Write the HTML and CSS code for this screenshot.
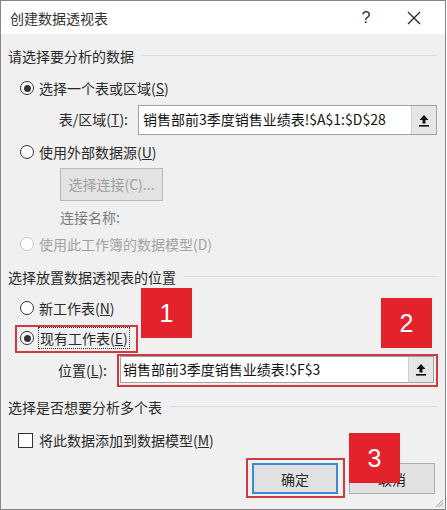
FILE: index.html
```html
<!DOCTYPE html>
<html lang="zh-CN">

<head>
    <meta charset="UTF-8">
    <title>创建数据透视表</title>
    <link rel="stylesheet" href="styles.css">
</head>

<body>
    <div class="dialog">
        <div class="titlebar">
            <span class="title">创建数据透视表</span>
            <span class="help">?</span>
            <span class="close">
                <svg width="14" height="14" viewBox="0 0 14 14"><path d="M1 1L13 13M13 1L1 13" stroke="#222" stroke-width="1.2" fill="none"/></svg>
            </span>
        </div>

        <div class="content">
            <div class="group-head g1"><span>请选择要分析的数据</span><i class="rule"></i></div>

            <div class="option o1"><span class="radio checked"></span>选择一个表或区域(<u>S</u>)</div>

            <div class="field f-table">
                <span class="field-label l-table">表/区域(<u>T</u>):</span>
                <div class="ref-input">
                    <span class="ref-text">销售部前3季度销售业绩表!$A$1:$D$28</span>
                    <span class="ref-btn">
                        <svg width="12" height="13" viewBox="0 0 12 13"><path d="M6 1L1.5 6H4.5V9.5H7.5V6H10.5Z" fill="#111"/><rect x="1" y="11" width="10" height="1.6" fill="#111"/></svg>
                    </span>
                </div>
            </div>

            <div class="option o2"><span class="radio"></span>使用外部数据源(<u>U</u>)</div>

            <div class="conn-btn">选择连接(C)...</div>
            <div class="conn-name">连接名称:</div>

            <div class="option o3 disabled"><span class="radio"></span>使用此工作簿的数据模型(D)</div>

            <div class="group-head g2"><span>选择放置数据透视表的位置</span><i class="rule"></i></div>

            <div class="option o4"><span class="radio"></span>新工作表(<u>N</u>)</div>
            <div class="option o5"><span class="radio checked"></span><span class="focus">现有工作表(<u>E</u>)</span></div>

            <div class="field f-pos">
                <span class="field-label l-pos">位置(<u>L</u>):</span>
                <div class="ref-input">
                    <span class="ref-text">销售部前3季度销售业绩表!$F$3</span>
                    <span class="ref-btn">
                        <svg width="12" height="13" viewBox="0 0 12 13"><path d="M6 1L1.5 6H4.5V9.5H7.5V6H10.5Z" fill="#111"/><rect x="1" y="11" width="10" height="1.6" fill="#111"/></svg>
                    </span>
                </div>
            </div>

            <div class="group-head g3"><span>选择是否想要分析多个表</span><i class="rule"></i></div>

            <div class="option o6"><span class="checkbox"></span>将此数据添加到数据模型(<u>M</u>)</div>

            <div class="actions">
                <button class="btn btn-ok">确定</button>
                <button class="btn">取消</button>
            </div>
        </div>

        <!-- annotations drawn over the dialog -->
        <div class="mark mark-existing"></div>
        <div class="mark mark-position"></div>
        <div class="mark mark-ok"></div>
        <div class="badge badge-1">1</div>
        <div class="badge badge-2">2</div>
        <div class="badge badge-3">3</div>

        <svg class="grip" width="10" height="10" viewBox="0 0 10 10"><path d="M9 2L2 9M9 5L5 9M9 8L8 9" stroke="#999" stroke-width="1"/></svg>
    </div>
</body>

</html>
```

FILE: styles.css
```css
body {
    margin: 0;
    padding: 0;
    background: #fff;
    font-family: "Noto Sans CJK SC", "Noto Sans", sans-serif;
    font-size: 14px;
    color: #2a2a2a;
}

.dialog {
    position: relative;
    box-sizing: border-box;
    width: 446px;
    height: 510px;
    border: 1px solid #858585;
    background: #f0f0f0;
}

.titlebar {
    display: flex;
    align-items: center;
    height: 33px;
    padding: 0 8px 0 9px;
    background: #fff;
}

.titlebar .title {
    flex: 1;
    line-height: 20px;
    color: #333;
}

.titlebar .help {
    width: 30px;
    text-align: center;
    font-family: "Liberation Sans", sans-serif;
    font-size: 16px;
    margin-right: 10px;
}

.titlebar .close {
    width: 46px;
    display: flex;
    justify-content: center;
}

.content {
    display: flex;
    flex-direction: column;
    padding: 0 8px 0 7px;
}

.group-head {
    display: flex;
    align-items: center;
    height: 20px;
    line-height: 20px;
}

.group-head .rule {
    flex: 1;
    margin-left: 8px;
    margin-top: -2px;
    border-top: 1px solid #dadada;
}

.g1 { margin-top: 12px; }
.g2 { margin-top: 13px; }
.g3 { margin-top: 14px; }

.option {
    display: flex;
    align-items: center;
    height: 20px;
    line-height: 20px;
    padding-left: 12px;
}

.o1 { margin-top: 12px; }
.o2 { margin-top: 7px; }
.o3 { margin-top: 8px; }
.o4 { margin-top: 11px; }
.o5 { margin-top: 10px; }
.o6 { margin-top: 13px; padding-left: 10px; }

.option.disabled {
    color: #a3a3a3;
}

.radio {
    box-sizing: border-box;
    width: 14px;
    height: 14px;
    border: 1px solid #333;
    border-radius: 50%;
    background: #fff;
    margin-right: 5px;
    display: flex;
    align-items: center;
    justify-content: center;
}

.radio.checked::after {
    content: "";
    width: 7px;
    height: 7px;
    border-radius: 50%;
    background: #333;
}

.disabled .radio {
    border-color: #c4c4c4;
}

.checkbox {
    box-sizing: border-box;
    width: 15px;
    height: 15px;
    border: 1px solid #333;
    background: #fff;
    margin-right: 6px;
}

.focus {
    outline: 1px dotted #333;
    outline-offset: 0;
    padding: 0 1px;
}

.field {
    display: flex;
    align-items: stretch;
}

.f-table {
    margin-top: 7px;
    height: 30px;
}

.f-pos {
    margin-top: 8px;
    height: 27px;
    margin-right: 3px;
}

.field-label {
    text-align: right;
    line-height: 28px;
}

.l-table {
    width: 120px;
    margin-right: 10px;
}

.l-pos {
    width: 99px;
    margin-right: 13px;
}

.ref-input {
    flex: 1;
    display: flex;
    box-sizing: border-box;
    border: 1px solid #a2a2a2;
    background: #fff;
}

.ref-text {
    flex: 1;
    padding-left: 4px;
    line-height: 26px;
    white-space: nowrap;
    overflow: hidden;
    font-size: 14px;
    color: #111;
}

.f-pos .ref-text {
    line-height: 24px;
    padding-left: 2px;
}

.ref-btn {
    width: 24px;
    display: flex;
    align-items: center;
    justify-content: center;
    background: #e6e6e6;
    border-left: 1px solid #cfcfcf;
}

.conn-btn {
    box-sizing: border-box;
    margin: 6px 0 0 52px;
    width: 103px;
    height: 33px;
    line-height: 31px;
    text-align: center;
    border: 1px solid #b9b9b9;
    background: #e3e3e3;
    color: #a0a0a0;
}

.conn-name {
    margin: 7px 0 0 52px;
    height: 18px;
    line-height: 18px;
    color: #7c7c7c;
}

.actions {
    display: flex;
    justify-content: flex-end;
    gap: 11px;
    margin-top: 13px;
    padding-right: 2px;
}

.btn {
    box-sizing: border-box;
    width: 86px;
    height: 31px;
    border: 1px solid #adadad;
    background: #e1e1e1;
    font-family: inherit;
    font-size: 14px;
    color: #2a2a2a;
    padding: 0;
}

.btn-ok {
    border: 2px solid #3c8ad6;
}

.mark {
    position: absolute;
    box-sizing: border-box;
    border: 2px solid #cc3a42;
}

.mark-existing {
    left: 14px;
    top: 324px;
    width: 123px;
    height: 28px;
}

.mark-position {
    left: 116px;
    top: 353px;
    width: 321px;
    height: 33px;
}

.mark-ok {
    left: 245px;
    top: 457px;
    width: 99px;
    height: 40px;
}

.badge {
    position: absolute;
    width: 51px;
    height: 50px;
    background: #e4222b;
    color: #fff;
    font-family: "Liberation Sans", sans-serif;
    font-size: 25px;
    display: flex;
    align-items: center;
    justify-content: center;
}

.badge-1 { left: 140px; top: 287px; }
.badge-2 { left: 380px; top: 297px; }
.badge-3 { left: 348px; top: 432px; }

.grip {
    position: absolute;
    right: 1px;
    bottom: 1px;
}
```
